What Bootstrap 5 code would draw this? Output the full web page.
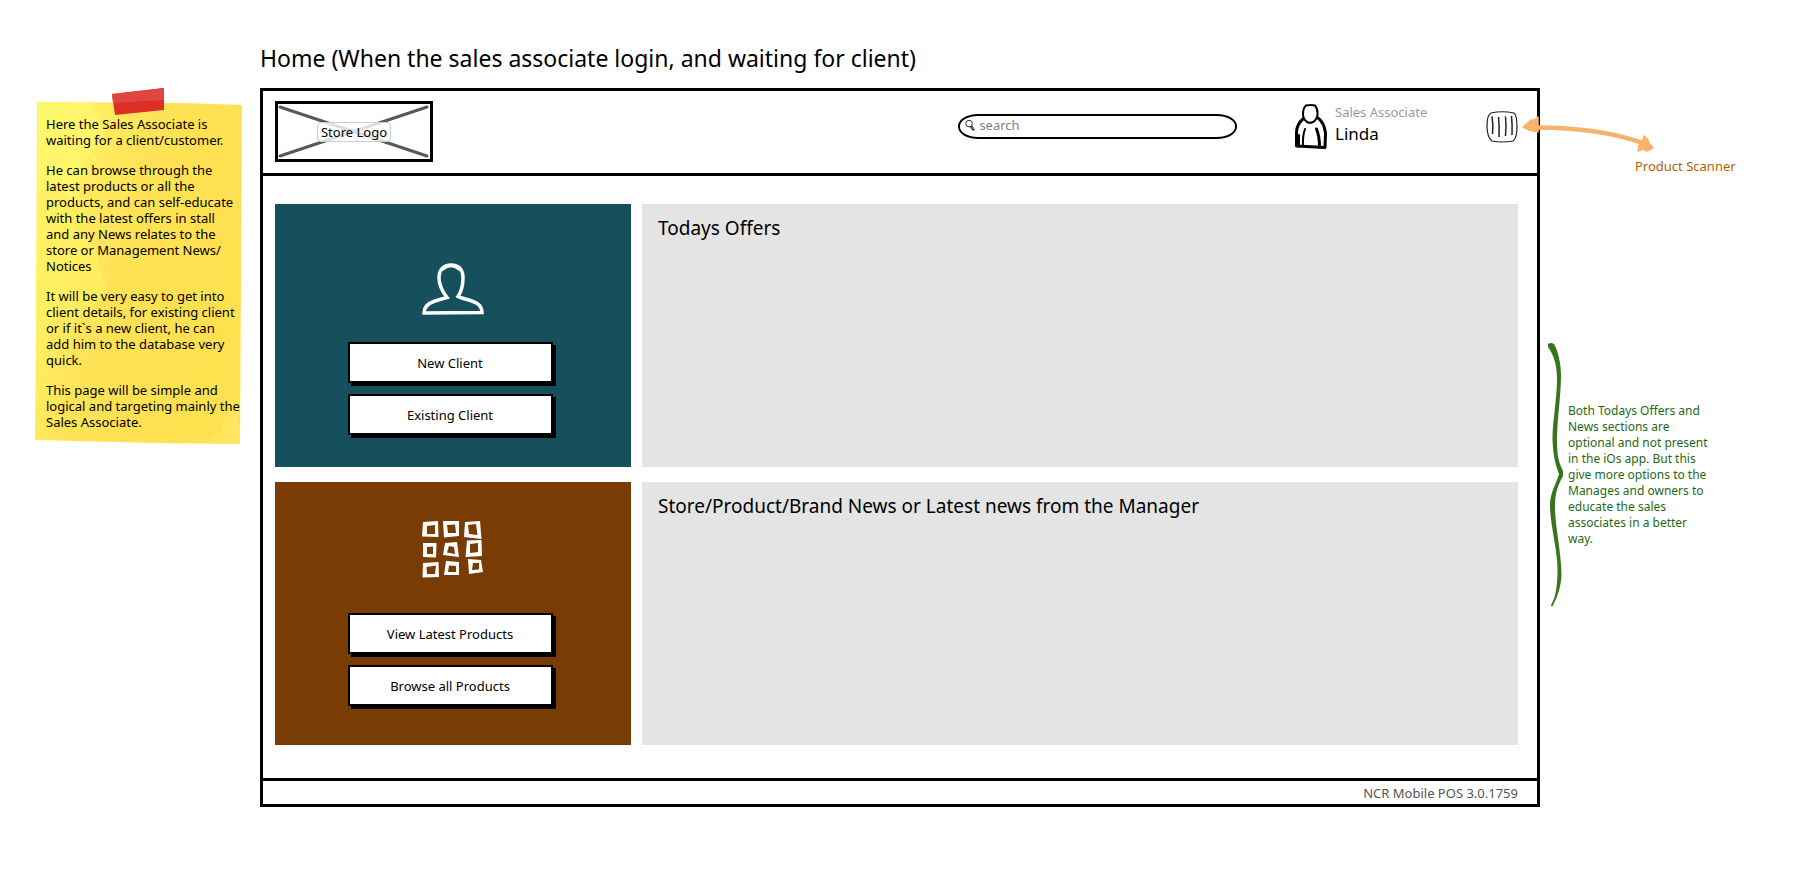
<!DOCTYPE html>
<html lang="en">
<head>
<meta charset="utf-8">
<meta name="viewport" content="width=device-width, initial-scale=1">
<title>NCR Mobile POS - Home</title>
<link href="https://cdn.jsdelivr.net/npm/bootstrap@5.3.0/dist/css/bootstrap.min.css" rel="stylesheet">
<style>
  body { font-family: "Noto Sans", sans-serif; font-size: 13px; line-height: 16px; color: #000; background: #fff; }
  .side-left { flex: 0 0 260px; padding: 101px 18px 0 35px; }
  .side-right { flex: 0 0 257px; padding-top: 158px; }
  .page-title { font-size: 23px; line-height: 32px; font-weight: 400; margin: 42px 0 14px; }

  /* sticky note */
  .sticky { padding: 15px 0 14px 11px; }
  .sticky p { margin-bottom: 14px; white-space: nowrap; }
  .sticky p:last-child { margin-bottom: 0; }
  .sticky-paper { position: absolute; inset: 0; width: 100%; height: 100%; z-index: -1; }
  .sticky-tape { position: absolute; top: -13px; left: 77px; }

  /* wireframe window */
  .frame { border: 3px solid #000; }
  .frame-head { height: 85px; padding: 0 19px 11px 12px; border-bottom: 3px solid #000; }
  .frame-body { padding: 28px 19px 33px 12px; row-gap: 15px; column-gap: 11px; grid-template-columns: 356fr 876fr; }
  .frame-foot { height: 26px; padding-right: 19px; border-top: 3px solid #000; color: #555; }
  .logo-box { width: 158px; height: 61px; border: 3px solid #000; }
  .logo-cross { position: absolute; inset: 0; width: 100%; height: 100%; }
  .logo-name { border: 1px solid #ccc; border-radius: 4px; background: rgba(255,255,255,.8); padding: 1px 3px; }
  .search-pill { width: 279px; height: 25px; border: 2px solid #000; border-radius: 20px / 12px; padding: 0 12px 3px 5px; margin-right: 58px; }
  .search-pill input { font-size: 13px; line-height: 16px; color: #000; outline: 0; }
  .search-pill input::placeholder { color: #808080; opacity: 1; }
  .user-area { width: 191px; }
  .role-text { color: #999; }
  .user-name { font-size: 17px; line-height: 28px; }

  .tile { min-height: 263px; }
  .tile-teal { background: #15505c; padding-top: 58px; }
  .tile-brown { background: #783c04; padding-top: 39px; }
  .tile-teal svg { margin-bottom: 27px; }
  .tile-brown svg { margin-bottom: 35px; }
  .tile-news { background: #e4e4e4; padding: 12px 16px; }
  .tile-news h2 { font-size: 19px; line-height: 24px; font-weight: 400; margin: 0; }
  .sketch-btn { width: 205px; height: 41px; margin: 0 6px 11px 0; padding: 0; border: 2px solid #000; border-radius: 0; background: #fff; color: #000; font-size: 13px; line-height: 16px; box-shadow: 3px 3px 0 #000; }
  .sketch-btn:hover { background: #eee; color: #000; border-color: #000; }

  /* margin notes */
  .scan-arrow { position: absolute; left: -19px; top: 112px; }
  .scan-label { color: #b45f06; margin-left: 95px; }
  .brace-note { color: #1c6b12; margin: 169px 0 0 8px; font-size: 12px; }
</style>
</head>
<body>
<div class="d-flex">
  <aside class="side-left">
    <div class="sticky position-relative z-0">
      <svg class="sticky-paper" viewBox="0 0 207 343" preserveAspectRatio="none" aria-hidden="true">
        <defs>
          <linearGradient id="paper" x1="0" y1="0" x2="1" y2=".45">
            <stop offset="0" stop-color="#fff56a"/><stop offset=".3" stop-color="#ffec60"/><stop offset=".5" stop-color="#ffe256"/><stop offset="1" stop-color="#ffe04f"/>
          </linearGradient>
        </defs>
        <path d="M2 1 L150 2 L207 4 L205 343 L120 342 L0 339 L1 240 Z" fill="url(#paper)"/>
        <path d="M2 90 L22 84 L34 120 L60 150 L72 190 L56 206 L74 226 L40 214 L1 220 Z" fill="#fff263" opacity=".6"/>
        <path d="M3 2 H58 L70 34 L48 62 L40 104 L22 84 L3 90 Z" fill="#fffa70" opacity=".6"/>
        <path d="M203 296 L192 312 L186 330 L170 342 H205 Z" fill="#ffe969" opacity=".6"/>
      </svg>
      <svg class="sticky-tape" width="53" height="27" viewBox="0 0 53 27" aria-hidden="true">
        <path d="M0 6 L52 0 V22 L3 27 Z" fill="#dc2f28"/><path d="M0 6 L52 0 V12 L1 15 Z" fill="#df463f"/>
      </svg>
      <p>Here the Sales Associate is<br>waiting for a client/customer.</p>
      <p>He can browse through the<br>latest products or all the<br>products, and can self-educate<br>with the latest offers in stall<br>and any News relates to the<br>store or Management News/<br>Notices</p>
      <p>It will be very easy to get into<br>client details, for existing client<br>or if it`s a new client, he can<br>add him to the database very<br>quick.</p>
      <p>This page will be simple and<br>logical and targeting mainly the<br>Sales Associate.</p>
    </div>
  </aside>

  <main class="flex-grow-1">
    <h1 class="page-title">Home (When the sales associate login, and waiting for client)</h1>
    <div class="frame">
      <header class="frame-head d-flex align-items-center">
        <div class="logo-box position-relative align-self-end d-flex align-items-center justify-content-center">
          <svg class="logo-cross" viewBox="0 0 152 55" preserveAspectRatio="none" aria-hidden="true">
            <path d="M2 3 L149 52 M149 3 L2 52" stroke="#58595b" stroke-width="3" stroke-linecap="round"/>
          </svg>
          <span class="logo-name position-relative">Store Logo</span>
        </div>
        <label class="search-pill ms-auto d-flex align-items-center gap-1">
          <svg width="11" height="13" viewBox="0 0 11 13" fill="none" stroke="#222" aria-hidden="true">
            <ellipse cx="4.300" cy="4.500" rx="3.500" ry="3.500"/><path d="M6.500 7.500 L9.500 11.500" stroke-width="2.600"/><path d="M7.500 8.500 L9 10.500" stroke="#fff" stroke-width=".8"/>
          </svg>
          <input type="search" class="border-0 bg-transparent p-0 w-100" placeholder="search" aria-label="Search">
        </label>
        <div class="user-area d-flex gap-2">
          <svg width="32" height="45" viewBox="0 0 32 45" fill="none" stroke="#000" stroke-linecap="round" stroke-linejoin="round" aria-hidden="true">
            <path d="M11 1.500 Q16 .5 20 1.500 Q23 5 22.500 11 Q21 17 18 18 Q15 19.500 12 18 Q8 15 8 10 Q8 4 11 1.500 Z" stroke-width="2"/>
            <path d="M8 15 Q2 20 1.500 28 L1.500 42 L30 43.500 L30.500 29 Q29 18 23 14" stroke-width="3"/>
            <path d="M10 25 Q7.500 32 8 42 M4 41 V31" stroke-width="2"/>
            <path d="M21.500 25 Q24.500 32 24.500 43" stroke-width="3"/>
          </svg>
          <div>
            <div class="role-text">Sales Associate</div>
            <div class="user-name">Linda</div>
          </div>
        </div>
        <svg width="32" height="32" viewBox="0 0 32 32" fill="none" stroke="#222" aria-hidden="true">
          <path d="M5 2 Q16 -.5 28 2 Q31 4 31 16 Q31 27 27 30 Q16 32 6 30 Q1 26 1 15 Q1 4 5 2 Z" stroke-width="1.200"/>
          <path d="M6 5.500 Q7.500 14 6.500 23 M12.500 6 Q13.500 15 13 26 M19.500 5.500 Q20.500 15 19.500 25 M25.500 5 Q26.500 14 26 24" stroke-width="1.500"/>
        </svg>
      </header>

      <div class="frame-body d-grid">
        <section class="tile tile-teal d-flex flex-column align-items-center">
          <svg width="62" height="53" viewBox="0 0 62 53" fill="none" stroke="#fff" stroke-width="3.500" aria-hidden="true">
            <path d="M2 51 C2 44 7 41 13 39 L25 35.500 C20 29 17 23 17 16 C17 7 22 3 29 3 C37 3 41 8 41 16 C41 24 39 30 36 34.500 C42 38 60 38 60 50.500 Z"/>
            <path d="M20 8 Q29 0 38 8" stroke-width="2.500"/>
          </svg>
          <button type="button" class="btn sketch-btn">New Client</button>
          <button type="button" class="btn sketch-btn">Existing Client</button>
        </section>
        <section class="tile tile-news"><h2>Todays Offers</h2></section>
        <section class="tile tile-brown d-flex flex-column align-items-center">
          <svg width="62" height="57" viewBox="0 0 62 57" fill="#fff" fill-rule="evenodd" aria-hidden="true">
            <path d="M1 1 L16 0 L16.500 16 L0 15.500 Z M5 5 L5 13 L13 13 L13 4 Z"/>
            <path d="M21 0 L37 0 L37 15 L22 16.500 Z M25 4 L26 12 L34 12 L33 3.500 Z"/>
            <path d="M43 1 L58 0 L59.500 18 L42 16 Z M46 4 L47 13 L55.500 14 L54 3 Z"/>
            <path d="M1 22 L14.500 22 L14 36.500 L1 36 Z M5 26 L5 33 L11 33 L11 25.500 Z"/>
            <path d="M23 22 L35 21 L37 36 L21 34 Z M27 25 L25 31.500 L33 33 L32 26 Z"/>
            <path d="M45 19.500 L59.500 19 L60 35 L43.500 36 Z M48 23 L48 32 L56 31 L56 22 Z"/>
            <path d="M1 42 L16.500 41 L17 56 L.5 56.500 Z M4.500 46 L5 53 L13 53 L14 44.500 Z"/>
            <path d="M24 40 L37 41 L37 54 L22 54 Z M27 44.500 L26 51 L34 51 L34 45 Z"/>
            <path d="M46 38 L59 39 L61 51 L47 53 Z M51 42 L50 49 L57 48.500 L57 42 Z"/>
          </svg>
          <button type="button" class="btn sketch-btn">View Latest Products</button>
          <button type="button" class="btn sketch-btn">Browse all Products</button>
        </section>
        <section class="tile tile-news"><h2>Store/Product/Brand News or Latest news from the Manager</h2></section>
      </div>

      <footer class="frame-foot d-flex align-items-center justify-content-end">NCR Mobile POS 3.0.1759</footer>
    </div>
  </main>

  <aside class="side-right position-relative">
    <svg class="scan-arrow" width="136" height="44" viewBox="0 0 136 44" aria-hidden="true">
      <path d="M12 15.500 Q76 15 122 31" fill="none" stroke="#f8b36b" stroke-width="4.500"/>
      <path d="M2 15 L10 8 L13 8 L17 5 V20 L8 18 Z M123 24 L127 28 L128 31 L132 36 L126 39 L122 37 L117 39 L118 33 L121 31 Z" fill="#f8b36b" stroke="#f8b36b" stroke-width="1.500" stroke-linejoin="round"/>
    </svg>
    <div class="scan-label">Product Scanner</div>
    <div class="brace-note d-flex align-items-center">
      <svg class="flex-shrink-0 me-1" width="16" height="264" viewBox="0 0 16 264" fill="#38761d" aria-hidden="true">
        <path d="M0 1 Q3 -1 6 1 C10 8 13 20 13 32 C13 52 9 78 9 96 C9 114 11 119 15 128 V133 C10 142 7 150 7 163 C7 185 13 205 13.500 232 C13 244 9 256 4 264 L3 262 C8 254 9.500 242 9.500 226 C9.500 206 2 182 2 162 C2 150 8 141 11 131 C8 123 5 114 4.500 96 C4.500 78 9 56 9 36 C9 20 5 11 0 4 Z"/>
      </svg>
      <div>Both Todays Offers and<br>News sections are<br>optional and not present<br>in the iOs app. But this<br>give more options to the<br>Manages and owners to<br>educate the sales<br>associates in a better<br>way.</div>
    </div>
  </aside>
</div>
<script src="https://cdn.jsdelivr.net/npm/bootstrap@5.3.0/dist/js/bootstrap.bundle.min.js"></script>
</body>
</html>
